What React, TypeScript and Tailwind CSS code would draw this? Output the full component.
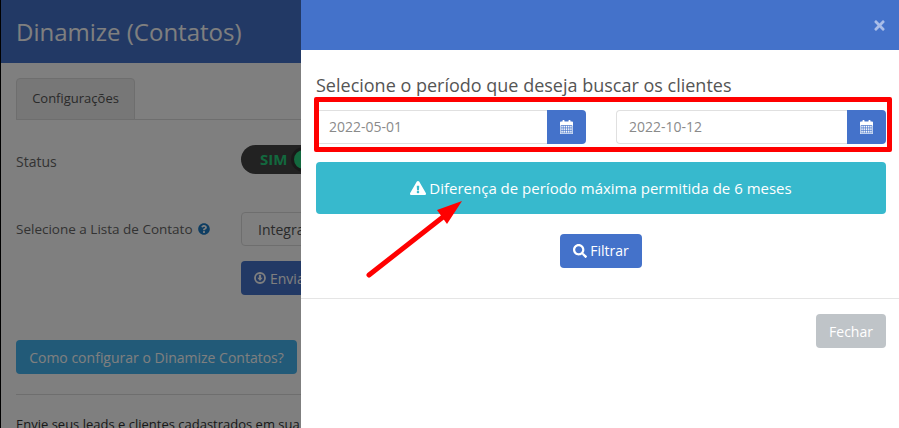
import { FaExclamationTriangle, FaQuestionCircle, FaSearch, FaTimes } from 'react-icons/fa'

function CalendarIcon() {
    return (
        <svg width="13" height="14" viewBox="0 0 13 14">
            <rect x="2.5" y="0" width="2" height="3.5" rx="0.7" fill="#fff" />
            <rect x="8.5" y="0" width="2" height="3.5" rx="0.7" fill="#fff" />
            <path d="M1 1.5h11a1 1 0 0 1 1 1V13a1 1 0 0 1-1 1H1a1 1 0 0 1-1-1V2.5a1 1 0 0 1 1-1z" fill="#fff" />
            <path
                d="M1 5.5h11v7.5H1z M3.2 5.5v7.5 M5.4 5.5v7.5 M7.6 5.5v7.5 M9.8 5.5v7.5 M1 7.9h11 M1 10.4h11"
                fill="none"
                stroke="#4472ca"
                strokeWidth="0.7"
            />
        </svg>
    )
}

function DownloadIcon() {
    return (
        <svg width="12" height="12" viewBox="0 0 12 12">
            <circle cx="6" cy="6" r="5" fill="none" stroke="#fff" strokeWidth="1.8" />
            <path d="M4.9 2.8h2.2v3h1.6L6 8.9 3.3 5.8h1.6z" fill="#fff" />
        </svg>
    )
}

function DateField({ value }: { value: string }) {
    return (
        <div className="flex h-[34px] w-[270px]">
            <div className="flex-1 flex items-center pl-[12px] pb-[1px] border border-[#e0e0e0] border-r-0 rounded-l-[4px] text-[14px] text-[#8a8a8a]">
                {value}
            </div>
            <button className="w-[39px] flex items-center justify-center bg-[#4472ca] rounded-r-[4px]">
                <CalendarIcon />
            </button>
        </div>
    )
}

function BackgroundPage() {
    return (
        <div className="w-[899px] h-[428px] bg-white overflow-hidden">
            <div className="h-[63px] bg-[#4472ca] flex items-center px-[16px]">
                <h1 className="text-[24px] text-white">Dinamize (Contatos)</h1>
            </div>
            <div className="px-[16px]">
                <div className="mt-[15px] h-[42px] border-b border-[#ddd]">
                    <div className="w-[119px] h-[42px] flex items-center justify-center bg-[#eee] border border-[#ddd] rounded-t-[4px] text-[13px] text-[#555]">
                        Configurações
                    </div>
                </div>
                <div className="mt-[25px] flex items-center h-[29px]">
                    <span className="w-[225px] pt-[3px] text-[14px] text-[#666]">Status</span>
                    <div className="w-[90px] h-[29px] rounded-full bg-[#444] flex items-center pl-[19px] gap-[4px]">
                        <span className="text-[15px] font-bold text-[#26d07c]">SIM</span>
                        <span className="w-[25px] h-[25px] rounded-full bg-[#26d07c] border-[3px] border-[#333]" />
                    </div>
                </div>
                <div className="mt-[38px] flex items-center h-[34px]">
                    <span className="w-[225px] text-[13.5px] text-[#666] flex items-center gap-[5px]">
                        Selecione a Lista de Contato
                        <FaQuestionCircle className="text-[12px] text-[#1c7cc7]" />
                    </span>
                    <div className="w-[200px] h-[34px] flex items-center pl-[16px] border border-[#ddd] rounded-[4px] text-[14px] text-[#555]">
                        Integração
                    </div>
                </div>
                <button className="mt-[15px] ml-[225px] w-[120px] h-[34px] flex items-center gap-[4px] pl-[13px] bg-[#4472ca] rounded-[4px] text-[14px] text-white">
                    <DownloadIcon />
                    Enviar
                </button>
                <button className="mt-[45px] w-[281px] h-[34px] flex items-center justify-center bg-[#44b4f0] rounded-[4px] text-[14px] text-white">
                    Como configurar o Dinamize Contatos?
                </button>
                <div className="mt-[20px] border-t border-[#ddd]" />
                <p className="mt-[20px] text-[13px] text-[#333] whitespace-nowrap">Envie seus leads e clientes cadastrados em sua</p>
            </div>
        </div>
    )
}

export default function App() {
    return (
        <div className="relative w-[899px] h-[428px] overflow-hidden font-['Open_Sans',sans-serif]">
            <BackgroundPage />
            <div className="absolute inset-0 bg-black/50 shadow-[inset_1px_0_0_#000]" />

            <div className="absolute top-0 left-[301px] w-[598px] h-[428px] bg-white">
                <div className="h-[50px] bg-[#4472ca] flex items-center justify-end pr-[12px]">
                    <FaTimes className="text-[15px] text-[#a9bde8]" />
                </div>
                <div className="pl-[15px] pr-[13px]">
                    <p className="mt-[23px] text-[18px] leading-[24px] text-[#555]">Selecione o período que deseja buscar os clientes</p>
                    <div className="mt-[13px] flex justify-between">
                        <DateField value="2022-05-01" />
                        <DateField value="2022-10-12" />
                    </div>
                    <div className="mt-[18px] h-[52px] flex items-center justify-center gap-[3px] bg-[#37b9cd] rounded-[4px] text-[15px] text-white">
                        <FaExclamationTriangle className="text-[16px]" />
                        Diferença de período máxima permitida de 6 meses
                    </div>
                    <div className="mt-[20px] flex justify-center">
                        <button className="w-[82px] h-[34px] flex items-center justify-center gap-[3px] pb-[1px] bg-[#4472ca] rounded-[4px] text-[14px] text-white">
                            <FaSearch className="text-[14px]" />
                            Filtrar
                        </button>
                    </div>
                </div>
                <div className="mt-[30px] border-t border-[#e5e5e5]" />
                <div className="mt-[15px] px-[13px] flex justify-end">
                    <button className="w-[70px] h-[34px] bg-[#bfc4c8] rounded-[4px] text-[14px] text-white">Fechar</button>
                </div>
            </div>

            {/* annotations drawn on top of the screenshot */}
            <div className="absolute left-[314px] top-[97px] w-[578px] h-[55px] border-[5px] border-[#ff0000] rounded-[2px]" />
            <svg className="absolute left-[360px] top-[195px]" width="110" height="90" viewBox="0 0 110 90">
                <line x1="9" y1="80" x2="83" y2="22" stroke="#ff0000" strokeWidth="5" strokeLinecap="round" />
                <polygon points="102,6 77,15 87,29" fill="#ff0000" />
            </svg>
        </div>
    )
}
